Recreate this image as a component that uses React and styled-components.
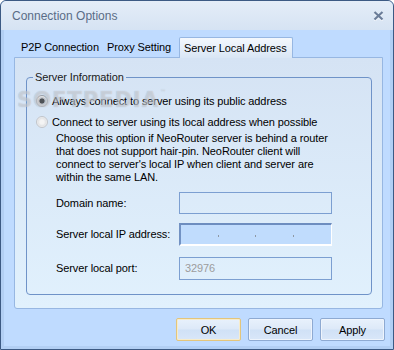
import React from 'react';
import styled, { createGlobalStyle, css } from 'styled-components';

const GlobalStyle = createGlobalStyle`
  html, body { margin: 0; padding: 0; background: #ffffff; }
  #root { width: 394px; height: 350px; }
`;

const Window = styled.div`
  position: relative;
  box-sizing: border-box;
  width: 394px;
  height: 350px;
  border: 1px solid #3c5a84;
  border-radius: 6px 6px 0 0;
  background: #bfdbff;
  box-shadow: inset 0 0 0 3px #b2cff4;
  display: flex;
  flex-direction: column;
  overflow: hidden;
  font-family: "Liberation Sans", Arial, sans-serif;
  font-size: 11px;
  letter-spacing: -0.1px;
  color: #000;
`;

const TitleBar = styled.div`
  height: 29px;
  flex: none;
  display: flex;
  align-items: center;
  justify-content: space-between;
  padding: 0 9px 0 11px;
  background: linear-gradient(#e4edf8, #d6e3f3);
  border-radius: 5px 5px 0 0;
`;

const Title = styled.span`
  font-size: 12px;
  letter-spacing: 0;
  color: #5a6c86;
  padding-top: 1px;
`;

const CloseButton = styled.span`
  display: flex;
  width: 11px;
  height: 10px;
  margin-top: 1px;
`;

const Body = styled.div`
  flex: 1;
  display: flex;
  flex-direction: column;
  padding: 7px 10px 0 13px;
`;

const TabRow = styled.div`
  display: flex;
  height: 21px;
  margin-bottom: -1px;
  position: relative;
  z-index: 1;
`;

const Tab = styled.div`
  box-sizing: border-box;
  width: ${p => p.$w}px;
  margin-left: ${p => p.$ml || 0}px;
  padding-left: ${p => p.$pl}px;
  line-height: 21px;
  white-space: nowrap;
  ${p => p.$active && css`
    border: 1px solid #97b7e2;
    border-bottom: none;
    border-radius: 2px 2px 0 0;
    background: linear-gradient(#f4f8fd, #d9e6f5);
    line-height: 20px;
  `}
`;

const Panel = styled.div`
  box-sizing: border-box;
  height: 252px;
  border: 1px solid #97b7e2;
  border-radius: 0 0 3px 3px;
  background: linear-gradient(#d5e3f4, #e1f1fd);
  padding: 13px 10px 0 11px;
`;

const Group = styled.fieldset`
  margin: 0;
  min-width: 0;
  padding: 0 10px 15px 9px;
  border: 1px solid #6f93c8;
  border-radius: 4px;
  display: flex;
  flex-direction: column;
`;

const Legend = styled.legend`
  margin-left: -3px;
  padding: 0 2px;
  line-height: 13px;
  color: #1a1a1a;
`;

const RadioRow = styled.label`
  display: flex;
  align-items: center;
  gap: 4px;
  height: 13px;
  margin-top: ${p => p.$mt}px;
  white-space: nowrap;
`;

const Radio = styled.span`
  box-sizing: border-box;
  width: 12px;
  height: 12px;
  flex: none;
  border-radius: 50%;
  border: 1px solid ${p => (p.$checked ? '#9a9ea5' : '#c2c5ca')};
  background: ${p => (p.$checked
    ? 'radial-gradient(circle, #4e5257 0 2.2px, #aeb2b8 2.8px, #d6d8db 4px, #eeeff0 5px)'
    : 'radial-gradient(circle, #f4f4f4 0 2px, #e2e3e5 4px, #f1f1f2 5px)')};
`;

const Description = styled.p`
  margin: 4px 0 0 20px;
  line-height: 13px;
`;

const FieldRow = styled.div`
  display: flex;
  align-items: center;
  margin: ${p => p.$mt}px 0 0 20px;
  height: 22px;
`;

const FieldLabel = styled.span`
  width: 123px;
  flex: none;
  white-space: nowrap;
`;

const TextBox = styled.div`
  box-sizing: border-box;
  width: 153px;
  height: ${p => p.$h || 22}px;
  border: 1px solid #7c9fd1;
  background: transparent;
  color: #9c9c9c;
  padding-left: 5px;
  line-height: 20px;
`;

const IpBox = styled.div`
  box-sizing: border-box;
  width: 153px;
  height: 23px;
  border-top: 2px solid #6d8dbf;
  border-left: 2px solid #7292c3;
  border-right: 1px solid #ffffff;
  border-bottom: 2px solid #ffffff;
  background: #c0dcfd;
  display: grid;
  grid-template-columns: repeat(4, 1fr);
  align-items: center;
`;

const IpDot = styled.span`
  justify-self: end;
  width: 1px;
  height: 2px;
  margin-top: 4px;
  background: #8f98a3;
  visibility: ${p => (p.$hidden ? 'hidden' : 'visible')};
`;

const ButtonRow = styled.div`
  display: flex;
  justify-content: flex-end;
  gap: 7px;
  margin: 9px -2px 0 0;
`;

const Button = styled.button`
  box-sizing: border-box;
  width: 65px;
  height: 23px;
  padding: 0;
  font-family: "Liberation Sans", Arial, sans-serif;
  font-size: 11px;
  letter-spacing: -0.1px;
  color: #000;
  border-radius: 2px;
  border: 1px solid ${p => (p.$default ? '#e3c57c' : '#8eaad2')};
  box-shadow: inset 0 0 0 1px ${p => (p.$default ? '#f7eccb' : '#eef4fc')};
  background: linear-gradient(#e8f1fc 0%, #dde9f8 48%, #d0e1f6 52%, #d9e7f9 100%);
`;

const Watermark = styled.div`
  position: absolute;
  left: 16px;
  top: 87px;
  font-family: "DejaVu Sans", sans-serif;
  font-size: 21px;
  font-weight: bold;
  letter-spacing: 1px;
  color: rgba(255, 255, 255, 0.35);
  text-shadow: 0 0 1px rgba(110, 120, 135, 0.45);
  pointer-events: none;
`;

const Tm = styled.sup`
  font-size: 6px;
  vertical-align: top;
  margin-left: 1px;
`;

export default function App() {
  return (
    <>
      <GlobalStyle />
      <Window>
        <TitleBar>
          <Title>Connection Options</Title>
          <CloseButton>
            <svg width="11" height="10" viewBox="0 0 11 10">
              <path d="M1.5 1.5 L9.5 9 M9.5 1.5 L1.5 9" stroke="#ffffff" strokeWidth="2.2" opacity="0.6" transform="translate(0 0.8)" />
              <path d="M1.5 1 L9.5 8.5 M9.5 1 L1.5 8.5" stroke="#6b7d99" strokeWidth="2.2" />
            </svg>
          </CloseButton>
        </TitleBar>
        <Body>
          <TabRow>
            <Tab $w={87} $pl={7}>P2P Connection</Tab>
            <Tab $w={72} $pl={6}>Proxy Setting</Tab>
            <Tab $w={114} $ml={6} $pl={4} $active>Server Local Address</Tab>
          </TabRow>
          <Panel>
            <Group>
              <Legend>Server Information</Legend>
              <RadioRow $mt={10}>
                <Radio $checked />
                Always connect to server using its public address
              </RadioRow>
              <RadioRow $mt={8}>
                <Radio />
                Connect to server using its local address when possible
              </RadioRow>
              <Description>
                Choose this option if NeoRouter server is behind a router<br />
                that does not support hair-pin. NeoRouter client will<br />
                connect to server's local IP when client and server are<br />
                within the same LAN.
              </Description>
              <FieldRow $mt={8}>
                <FieldLabel>Domain name:</FieldLabel>
                <TextBox />
              </FieldRow>
              <FieldRow $mt={9}>
                <FieldLabel>Server local IP address:</FieldLabel>
                <IpBox>
                  <IpDot />
                  <IpDot />
                  <IpDot />
                  <IpDot $hidden />
                </IpBox>
              </FieldRow>
              <FieldRow $mt={12}>
                <FieldLabel>Server local port:</FieldLabel>
                <TextBox $h={23}>32976</TextBox>
              </FieldRow>
            </Group>
          </Panel>
          <ButtonRow>
            <Button $default>OK</Button>
            <Button>Cancel</Button>
            <Button>Apply</Button>
          </ButtonRow>
        </Body>
        <Watermark>
          SOFTPEDIA<Tm>™</Tm>
        </Watermark>
      </Window>
    </>
  );
}
